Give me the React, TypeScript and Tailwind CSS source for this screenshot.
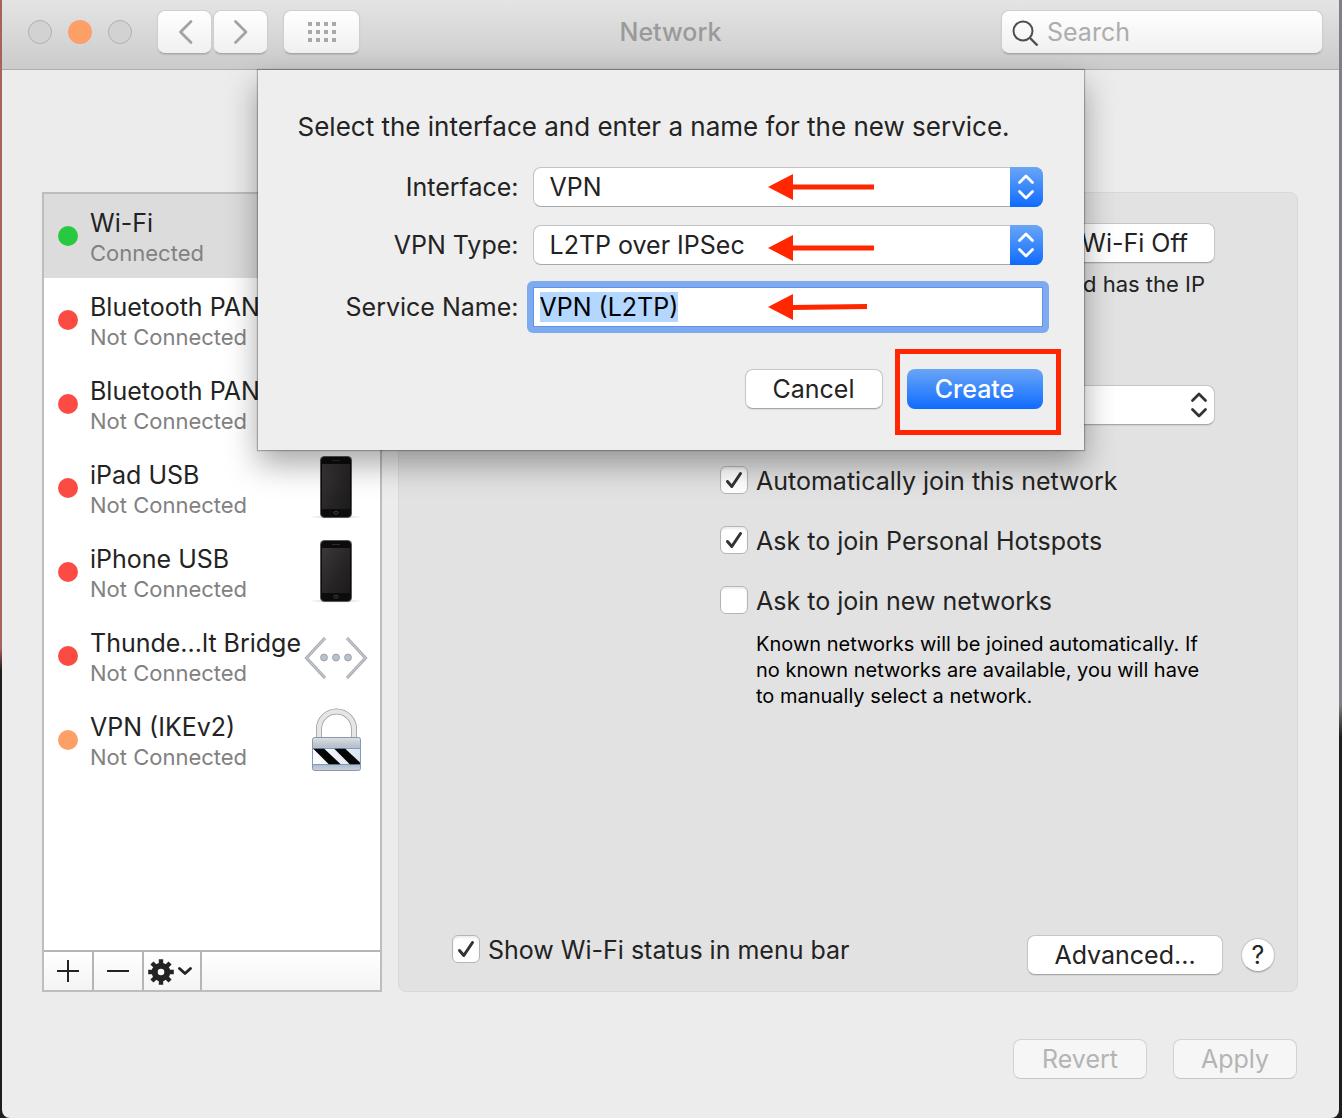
import { useEffect, useRef } from "react";
import type { ReactNode } from "react";

const services = [
  { name: "Wi-Fi", status: "Connected", dot: "bg-[#28c940]", icon: null, active: true },
  { name: "Bluetooth PAN", status: "Not Connected", dot: "bg-[#fc4b43]", icon: null },
  { name: "Bluetooth PAN 2", status: "Not Connected", dot: "bg-[#fc4b43]", icon: null },
  { name: "iPad USB", status: "Not Connected", dot: "bg-[#fc4b43]", icon: "phone" },
  { name: "iPhone USB", status: "Not Connected", dot: "bg-[#fc4b43]", icon: "phone" },
  { name: "Thunde...lt Bridge", status: "Not Connected", dot: "bg-[#fc4b43]", icon: "bridge" },
  { name: "VPN (IKEv2)", status: "Not Connected", dot: "bg-[#fca067]", icon: "lock" },
];

function PhoneIcon() {
  return (
    <svg width="64" height="64" viewBox="0 0 64 64" aria-hidden="true">
      <defs>
        <linearGradient id="screen" x1="0" y1="0" x2="1" y2="1">
          <stop offset="0" stopColor="#3d3839" />
          <stop offset="0.6" stopColor="#262425" />
          <stop offset="1" stopColor="#1c1b1c" />
        </linearGradient>
      </defs>
      <ellipse cx="32" cy="61" rx="24" ry="1.5" fill="#000" opacity="0.08" />
      <rect x="16" y="0" width="32" height="62" rx="4.5" fill="#5b595a" />
      <rect x="17" y="1" width="30" height="60" rx="3.8" fill="#0d0c0d" />
      <rect x="18" y="8" width="28" height="45" fill="url(#screen)" />
      <path d="M28 4.5h8" stroke="#2c2c2c" strokeWidth="1" />
      <rect x="30" y="55.500" width="4" height="2.500" rx="1.200" fill="none" stroke="#4a4a4a" strokeWidth="0.8" />
    </svg>
  );
}

function BridgeIcon() {
  return (
    <svg width="64" height="64" viewBox="0 0 64 64" fill="none" aria-hidden="true">
      <path d="M21 14 2.500 34 21 54M43 14 61.500 34 43 54" stroke="#a0a4a9" strokeWidth="3" />
      <path d="M21 14 2.500 34 21 54M43 14 61.500 34 43 54" stroke="#c6cad0" strokeWidth="1.200" />
      {[20, 32, 44].map((x) => (
        <circle key={x} cx={x} cy="33.500" r="3.400" fill="#b7c3d2" stroke="#9a9fa5" strokeWidth="1" />
      ))}
    </svg>
  );
}

function LockIcon() {
  return (
    <svg width="64" height="64" viewBox="0 0 64 64" fill="none" aria-hidden="true">
      <defs>
        <linearGradient id="lockbody" x1="0" y1="0" x2="0" y2="1">
          <stop offset="0" stopColor="#dde0e3" />
          <stop offset="0.25" stopColor="#b9c2cd" />
          <stop offset="0.8" stopColor="#a9b9cd" />
          <stop offset="1" stopColor="#c9d0d8" />
        </linearGradient>
        <linearGradient id="band" x1="0" y1="0" x2="1" y2="0">
          <stop offset="0" stopColor="#ffffff" />
          <stop offset="1" stopColor="#dbe3ee" />
        </linearGradient>
        <clipPath id="stripe">
          <rect x="8.500" y="40.500" width="47.500" height="16" />
        </clipPath>
      </defs>
      <path d="M15 30V21a17.500 17.500 0 0 1 35 0v9" stroke="#9b9b9b" strokeWidth="6" />
      <path d="M15 30V21a17.500 17.500 0 0 1 35 0v9" stroke="#e6e6e6" strokeWidth="4.500" />
      <rect x="8.500" y="29.500" width="48" height="33" rx="2" fill="url(#lockbody)" stroke="#8b98a8" strokeWidth="1" />
      <rect x="8.500" y="40.500" width="48" height="16" fill="url(#band)" stroke="#7d9cc4" strokeWidth="1" />
      <g clipPath="url(#stripe)" fill="#050505">
        <path d="M9 40.500h11l17 16H25z" />
        <path d="M30 40.500h11l17 16H46z" />
      </g>
    </svg>
  );
}

function UpDown() {
  return (
    <svg width="18" height="26" viewBox="0 0 18 26" fill="none" aria-hidden="true">
      <path
        d="M2.500 8.500 9 2l6.500 6.500M2.500 17.500 9 24l6.500-6.500"
        stroke="currentColor"
        strokeWidth="2.800"
        strokeLinecap="round"
        strokeLinejoin="round"
      />
    </svg>
  );
}

function Arrow({ short = false }: { short?: boolean }) {
  return (
    <svg width="108" height="26" viewBox="0 0 108 26" aria-hidden="true">
      <path d="M0 13 25 0v26z" fill="#ff2600" />
      {short ? (
        <path d="M24 13.500 99 12.500" stroke="#ff2600" strokeWidth="5" />
      ) : (
        <path d="M24 13H106" stroke="#ff2600" strokeWidth="5" />
      )}
    </svg>
  );
}

function PopUp({ id, options, arrowClass = "" }: { id: string; options: string[]; arrowClass?: string }) {
  return (
    <div className="relative h-10">
      <select
        id={id}
        className="h-10 w-full appearance-none rounded-lg border border-[#c4c4c4] border-b-[#a9a9a9] bg-white pr-10 pl-4 text-[#232323] outline-none"
      >
        {options.map((o) => (
          <option key={o}>{o}</option>
        ))}
      </select>
      <span className="pointer-events-none absolute inset-y-0 right-0 flex w-[33px] items-center justify-center rounded-r-lg bg-linear-to-b from-[#6aa5f8] via-[#3b89fb] to-[#0a6afe] text-white">
        <UpDown />
      </span>
      <span className={`pointer-events-none absolute inset-y-0 left-[235px] flex items-center ${arrowClass}`}>
        <Arrow />
      </span>
    </div>
  );
}

function Check({ children, checked = false }: { children: ReactNode; checked?: boolean }) {
  return (
    <label className="flex items-start gap-2">
      <span className="relative mt-px size-7 shrink-0">
        <input
          type="checkbox"
          defaultChecked={checked}
          className="peer block size-7 appearance-none rounded-md border border-[#b5b5b5] bg-white shadow-[inset_0_2px_2px_rgba(0,0,0,0.08)]"
        />
        <svg
          viewBox="0 0 28 28"
          fill="none"
          aria-hidden="true"
          className="pointer-events-none absolute inset-0 hidden peer-checked:block"
        >
          <path
            d="M7.500 15.500 11.800 20.500 20.500 7.500"
            stroke="#333"
            strokeWidth="3"
            strokeLinecap="round"
            strokeLinejoin="round"
          />
        </svg>
      </span>
      <span>{children}</span>
    </label>
  );
}

const pushButton =
  "h-10 rounded-lg border border-[#c6c6c6] border-b-[#a8a8a8] bg-white text-center shadow-[0_1px_1px_rgba(0,0,0,0.08)]";
const barButton =
  "flex h-11 items-center justify-center rounded-lg border border-[#cfcfcf] border-b-[#a9a9a9] bg-linear-to-b from-white to-[#f0f0f0] text-[#a3a3a3] shadow-[0_1px_1px_rgba(0,0,0,0.12)]";
const fadedButton = "h-10 rounded-lg border border-[#d2d2d2] border-b-[#c6c6c6] bg-[#f6f6f6] text-[#b4b4b4]";

export default function App() {
  const nameRef = useRef<HTMLInputElement>(null);
  useEffect(() => {
    nameRef.current?.focus();
    nameRef.current?.select();
  }, []);

  return (
    <div className="flex min-h-screen bg-[#1d1c1e] font-['Inter',sans-serif] text-[25px] leading-8 text-[#232323]">
      <div className="w-0.5 shrink-0 bg-linear-to-b from-[#a8625d] from-0% via-[#a8625d] via-58% to-[#1d1c1e] to-60%" />
      <div className="relative flex min-w-0 flex-1 flex-col rounded-b-lg bg-[#ececec]">
        <header className="grid h-[70px] grid-cols-[1fr_auto_1fr] items-start border-b border-[#adadad] bg-linear-to-b from-[#e4e4e4] to-[#cbcbcb] px-4 pt-2.5">
          <div className="flex items-center pl-2.5">
            <div className="flex gap-4">
              <button aria-label="Close" className="size-6 rounded-full border border-[#b0b0b0] bg-[#d2d2d2]" />
              <button aria-label="Minimize" className="size-6 rounded-full bg-[#fca067]" />
              <button aria-label="Zoom" className="size-6 rounded-full border border-[#b0b0b0] bg-[#d2d2d2]" />
            </div>
            <div className="ml-[25px] flex gap-px">
              <button aria-label="Back" className={`${barButton} w-[55px]`}>
                <svg width="16" height="26" viewBox="0 0 16 26" fill="none" aria-hidden="true">
                  <path
                    d="M14 2.500 3.500 13 14 23.500"
                    stroke="currentColor"
                    strokeWidth="2.800"
                    strokeLinecap="round"
                    strokeLinejoin="round"
                  />
                </svg>
              </button>
              <button aria-label="Forward" className={`${barButton} w-[55px]`}>
                <svg width="16" height="26" viewBox="0 0 16 26" fill="none" aria-hidden="true">
                  <path
                    d="M2.500 2.500 13 13 2.500 23.500"
                    stroke="currentColor"
                    strokeWidth="2.800"
                    strokeLinecap="round"
                    strokeLinejoin="round"
                  />
                </svg>
              </button>
            </div>
            <button aria-label="Show All" className={`${barButton} ml-[15px] w-[77px]`}>
              <svg width="28" height="20" viewBox="0 0 28 20" fill="#a8a8a8" aria-hidden="true">
                {[0, 8, 16].map((y) =>
                  [0, 8, 16, 24].map((x) => <rect key={`${x}-${y}`} x={x} y={y} width="4" height="4" />),
                )}
              </svg>
            </button>
          </div>
          <h1 className="pt-1.5 font-medium text-[#9a9a9a]">Network</h1>
          <label className="flex h-11 w-[322px] items-center gap-2 justify-self-end rounded-lg border border-[#cfcfcf] border-b-[#a9a9a9] bg-linear-to-b from-white to-[#f0f0f0] pl-2.5 shadow-[0_1px_1px_rgba(0,0,0,0.12)]">
            <svg width="27" height="27" viewBox="0 0 27 27" fill="none" aria-hidden="true" className="shrink-0">
              <circle cx="11" cy="12" r="9.500" stroke="#4d4d4d" strokeWidth="2" />
              <path d="m18 19 7.500 7.500" stroke="#4d4d4d" strokeWidth="2.400" />
            </svg>
            <input
              type="search"
              aria-label="Search"
              placeholder="Search"
              className="w-full min-w-0 bg-transparent outline-none placeholder:text-[#adadad]"
            />
          </label>
        </header>

        <main className="flex flex-1 gap-4 pt-[122px] pr-[41px] pl-10">
          <section
            aria-label="Services"
            className="flex w-[340px] shrink-0 flex-col border-2 border-[#bdbdbd] bg-white"
          >
            <ul className="flex-1">
              {services.map((s) => (
                <li key={s.name} className={`flex h-21 items-center pr-3 pl-3.5 ${s.active ? "bg-[#dcdcdc]" : ""}`}>
                  <span className={`mr-3 size-5 shrink-0 rounded-full ${s.dot}`} />
                  <div className="min-w-0 flex-1 pt-1 leading-[30px] whitespace-nowrap">
                    <div>{s.name}</div>
                    <div className="text-[22px] text-[#818181]">{s.status}</div>
                  </div>
                  {s.icon === "phone" && <PhoneIcon />}
                  {s.icon === "bridge" && <BridgeIcon />}
                  {s.icon === "lock" && <LockIcon />}
                </li>
              ))}
            </ul>
            <div className="flex h-10 border-t-2 border-[#b5b5b5] bg-linear-to-b from-white to-[#f4f4f4]">
              <button
                aria-label="Add service"
                className="flex w-[50px] items-center justify-center border-r-2 border-[#b5b5b5]"
              >
                <svg width="22" height="22" viewBox="0 0 22 22" stroke="#232323" strokeWidth="2" aria-hidden="true">
                  <path d="M0 11h22M11 0v22" />
                </svg>
              </button>
              <button
                aria-label="Remove service"
                className="flex w-[50px] items-center justify-center border-r-2 border-[#b5b5b5]"
              >
                <svg width="22" height="22" viewBox="0 0 22 22" stroke="#232323" strokeWidth="2" aria-hidden="true">
                  <path d="M0 11h22" />
                </svg>
              </button>
              <button
                aria-label="Service actions"
                className="flex w-[58px] items-center gap-1 border-r-2 border-[#b5b5b5] pt-0.5 pl-1"
              >
                <svg width="26" height="26" viewBox="-13 -13 26 26" fill="none" aria-hidden="true">
                  <circle r="6.300" stroke="#232323" strokeWidth="6" />
                  {[0, 45, 90, 135].map((a) => (
                    <path
                      key={a}
                      d="M-2.200-12.800h4.400v5h-4.400zM-2.200 7.800h4.400v5h-4.400z"
                      fill="#232323"
                      transform={`rotate(${a})`}
                    />
                  ))}
                </svg>
                <svg width="14" height="11" viewBox="0 0 14 11" fill="none" aria-hidden="true">
                  <path
                    d="m1.500 1.500 5.500 5 5.500-5"
                    stroke="#232323"
                    strokeWidth="2.800"
                    strokeLinecap="round"
                    strokeLinejoin="round"
                  />
                </svg>
              </button>
            </div>
          </section>

          <section
            aria-label="Wi-Fi settings"
            className="flex min-w-0 flex-1 flex-col rounded-lg border border-[#d9d9d9] bg-[#e2e2e2] pt-[30px] pr-[22px] pb-[15px] pl-[53px]"
          >
            <div className="flex flex-col pr-[60px]">
              <button className={`${pushButton} self-end px-[26px]`}>Turn Wi-Fi Off</button>
              <p className="mt-1.5 self-end pr-2.5 text-[22px] leading-[30px]">and has the IP</p>
              <div className="relative mt-[86px] w-[458px] self-end">
                <select aria-label="Network Name" className={`${pushButton} w-full appearance-none`} />
                <span className="pointer-events-none absolute inset-y-0 right-0 flex w-[33px] items-center justify-center text-[#333]">
                  <UpDown />
                </span>
              </div>
            </div>
            <div className="mt-10 ml-[268px] flex flex-col gap-7">
              <Check checked>Automatically join this network</Check>
              <Check checked>Ask to join Personal Hotspots</Check>
              <Check>Ask to join new networks</Check>
            </div>
            <p className="mt-3.5 ml-[304px] max-w-[460px] text-[20px] leading-[26px] text-black">
              Known networks will be joined automatically. If no known networks are available, you will have to manually
              select a network.
            </p>
            <div className="mt-auto flex items-center">
              <div className="mb-2.5 flex-1">
                <Check checked>Show Wi-Fi status in menu bar</Check>
              </div>
              <button className={`${pushButton} w-[196px]`}>Advanced...</button>
              <button
                aria-label="Help"
                className="ml-[18px] size-[34px] rounded-full border border-[#c6c6c6] border-b-[#a8a8a8] bg-white leading-7 shadow-[0_1px_1px_rgba(0,0,0,0.12)]"
              >
                ?
              </button>
            </div>
          </section>
        </main>

        <footer className="flex justify-end gap-[26px] pt-[47px] pr-[42px] pb-[39px]">
          <button disabled className={`${fadedButton} w-[134px]`}>
            Revert
          </button>
          <button disabled className={`${fadedButton} w-[124px]`}>
            Apply
          </button>
        </footer>

        <form
          role="dialog"
          aria-label="New service"
          onSubmit={(e) => e.preventDefault()}
          className="absolute inset-x-0 top-[70px] mx-auto w-[826px] bg-[#eeeeee] pt-[41px] pr-[41px] pb-[41px] pl-10 shadow-[0_0_1px_1px_rgba(0,0,0,0.25),0_14px_30px_rgba(0,0,0,0.35)]"
        >
          <p className="text-[26px]">Select the interface and enter a name for the new service.</p>
          <div className="mt-6 grid grid-cols-[221px_1fr] items-center gap-x-3.5 gap-y-[18px]">
            <label htmlFor="interface" className="text-right">
              Interface:
            </label>
            <PopUp id="interface" options={["VPN"]} />
            <label htmlFor="vpn-type" className="text-right">
              VPN Type:
            </label>
            <PopUp id="vpn-type" options={["L2TP over IPSec"]} arrowClass="pt-1.5" />
            <label htmlFor="service-name" className="pt-1 text-right">
              Service Name:
            </label>
            <div className="relative mt-1 h-10">
              <div className="-m-1.5 rounded-md bg-[#7eaaf0] p-1.5">
                <input
                  id="service-name"
                  ref={nameRef}
                  defaultValue="VPN (L2TP)"
                  className="block h-10 w-full border border-[#5f93e8] bg-white px-1.5 leading-8 text-black outline-none selection:bg-[#b3d7ff] selection:text-black"
                />
              </div>
              <span className="pointer-events-none absolute inset-y-0 left-[235px] flex items-center">
                <Arrow short />
              </span>
            </div>
          </div>
          <div className="mt-[42px] flex justify-end gap-6">
            <button type="button" className={`${pushButton} w-[138px]`}>
              Cancel
            </button>
            <div className="relative">
              <button
                type="submit"
                className="h-10 w-[136px] rounded-lg bg-linear-to-b from-[#6aa5f8] via-[#3b89fb] to-[#0a6afe] font-medium text-white"
              >
                Create
              </button>
              <span className="pointer-events-none absolute -top-5 -right-[18px] -bottom-[26px] -left-3 border-5 border-[#ff2600]" />
            </div>
          </div>
        </form>
      </div>
      <div className="w-[3px] shrink-0 bg-linear-to-b from-[#827e85] from-8% via-[#858087] via-63% to-[#1d1c1e] to-66%" />
    </div>
  );
}
